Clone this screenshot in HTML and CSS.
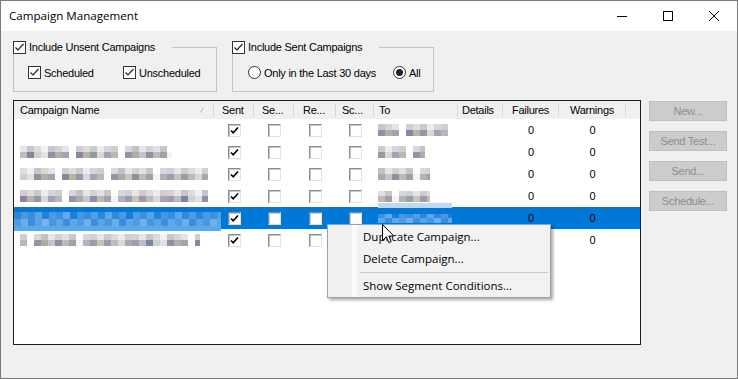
FILE: index.html
```html
<!DOCTYPE html>
<html>
<head>
<meta charset="utf-8">
<title>Campaign Management</title>
<link rel="stylesheet" href="styles.css">
</head>
<body>
<div class="window">
  <div class="titlebar">
    <span class="title">Campaign Management</span>
    <div class="wctl">
      <span class="wbtn"><svg width="10" height="10" viewBox="0 0 10 10"><path d="M0 5.5H10" stroke="#000" stroke-width="1"/></svg></span>
      <span class="wbtn"><svg width="10" height="10" viewBox="0 0 10 10"><rect x="0.5" y="0.5" width="9" height="9" fill="none" stroke="#000" stroke-width="1"/></svg></span>
      <span class="wbtn"><svg width="10" height="10" viewBox="0 0 10 10"><path d="M0 0L10 10M10 0L0 10" stroke="#000" stroke-width="1"/></svg></span>
    </div>
  </div>
  <div class="client">
    <div class="filters">
      <div class="group g1">
        <div class="legend"><span class="cbx"><svg width="11" height="11" viewBox="0 0 11 11"><path d="M1.5 5.5L4 8L9.5 2" fill="none" stroke="#222" stroke-width="1.2"/></svg></span>Include Unsent Campaigns</div>
        <div class="group-body">
          <div class="opt w95"><span class="cbx"><svg width="11" height="11" viewBox="0 0 11 11"><path d="M1.5 5.5L4 8L9.5 2" fill="none" stroke="#222" stroke-width="1.2"/></svg></span>Scheduled</div>
          <div class="opt"><span class="cbx"><svg width="11" height="11" viewBox="0 0 11 11"><path d="M1.5 5.5L4 8L9.5 2" fill="none" stroke="#222" stroke-width="1.2"/></svg></span>Unscheduled</div>
        </div>
      </div>
      <div class="group g2">
        <div class="legend"><span class="cbx"><svg width="11" height="11" viewBox="0 0 11 11"><path d="M1.5 5.5L4 8L9.5 2" fill="none" stroke="#222" stroke-width="1.2"/></svg></span>Include Sent Campaigns</div>
        <div class="group-body gb2">
          <div class="opt w145"><span class="rad"></span>Only in the Last 30 days</div>
          <div class="opt"><span class="rad on"></span>All</div>
        </div>
      </div>
    </div>
    <div class="main">
      <div class="list">
        <div class="hdr">
          <div class="hc hname">Campaign Name<svg class="sortg" width="4" height="6" viewBox="0 0 4 6"><path d="M0.5 5.5L3.5 0.5" stroke="#b0b0b0" stroke-width="1"/></svg></div>
          <div class="hc p8">Sent</div>
          <div class="hc p8">Se...</div>
          <div class="hc p9">Re...</div>
          <div class="hc p6">Sc...</div>
          <div class="hc p5">To</div>
          <div class="hc p4">Details</div>
          <div class="hc ctr">Failures</div>
          <div class="hc ctr">Warnings</div>
          <div class="hc last"></div>
        </div>

        <div class="row">
          <div class="c name"></div>
          <div class="c ctr"><span class="rcb"><svg width="9" height="9" viewBox="0 0 9 9"><path d="M1 4.5L3.2 6.8L8 1.5" fill="none" stroke="#000" stroke-width="1.7"/></svg></span></div>
          <div class="c ctr"><span class="rcb"></span></div>
          <div class="c ctr"><span class="rcb"></span></div>
          <div class="c ctr"><span class="rcb"></span></div>
          <div class="c to"><span class="blur b1 w70"></span></div>
          <div class="c"></div>
          <div class="c ctr">0</div>
          <div class="c ctr">0</div>
          <div class="c"></div>
        </div>

        <div class="row">
          <div class="c name"><span class="blur b2 w152"></span></div>
          <div class="c ctr"><span class="rcb"><svg width="9" height="9" viewBox="0 0 9 9"><path d="M1 4.5L3.2 6.8L8 1.5" fill="none" stroke="#000" stroke-width="1.7"/></svg></span></div>
          <div class="c ctr"><span class="rcb"></span></div>
          <div class="c ctr"><span class="rcb"></span></div>
          <div class="c ctr"><span class="rcb"></span></div>
          <div class="c to"><span class="blur b3 w47"></span></div>
          <div class="c"></div>
          <div class="c ctr">0</div>
          <div class="c ctr">0</div>
          <div class="c"></div>
        </div>

        <div class="row">
          <div class="c name"><span class="blur b4 w188"></span></div>
          <div class="c ctr"><span class="rcb"><svg width="9" height="9" viewBox="0 0 9 9"><path d="M1 4.5L3.2 6.8L8 1.5" fill="none" stroke="#000" stroke-width="1.7"/></svg></span></div>
          <div class="c ctr"><span class="rcb"></span></div>
          <div class="c ctr"><span class="rcb"></span></div>
          <div class="c ctr"><span class="rcb"></span></div>
          <div class="c to"><span class="blur b5 w52"></span></div>
          <div class="c"></div>
          <div class="c ctr">0</div>
          <div class="c ctr">0</div>
          <div class="c"></div>
        </div>

        <div class="row">
          <div class="c name"><span class="blur b6 w188"></span></div>
          <div class="c ctr"><span class="rcb"><svg width="9" height="9" viewBox="0 0 9 9"><path d="M1 4.5L3.2 6.8L8 1.5" fill="none" stroke="#000" stroke-width="1.7"/></svg></span></div>
          <div class="c ctr"><span class="rcb"></span></div>
          <div class="c ctr"><span class="rcb"></span></div>
          <div class="c ctr"><span class="rcb"></span></div>
          <div class="c to stack"><span class="blur b7 w52"></span><span class="tipbar"></span></div>
          <div class="c"></div>
          <div class="c ctr">0</div>
          <div class="c ctr">0</div>
          <div class="c"></div>
        </div>

        <div class="row sel">
          <div class="c name selname"><span class="blur sblur w207"></span><span class="selbar"></span></div>
          <div class="c ctr"><span class="rcb"><svg width="9" height="9" viewBox="0 0 9 9"><path d="M1 4.5L3.2 6.8L8 1.5" fill="none" stroke="#000" stroke-width="1.7"/></svg></span></div>
          <div class="c ctr"><span class="rcb"></span></div>
          <div class="c ctr"><span class="rcb"></span></div>
          <div class="c ctr"><span class="rcb"></span></div>
          <div class="c to"><span class="blur sblur2 w74"></span></div>
          <div class="c"></div>
          <div class="c ctr">0</div>
          <div class="c ctr">0</div>
          <div class="c"></div>
        </div>

        <div class="row">
          <div class="c name"><span class="blur b8 w180"></span></div>
          <div class="c ctr"><span class="rcb"><svg width="9" height="9" viewBox="0 0 9 9"><path d="M1 4.5L3.2 6.8L8 1.5" fill="none" stroke="#000" stroke-width="1.7"/></svg></span></div>
          <div class="c ctr"><span class="rcb"></span></div>
          <div class="c ctr"><span class="rcb"></span></div>
          <div class="c ctr"><span class="rcb"></span></div>
          <div class="c to"><span class="blur b3 w52"></span></div>
          <div class="c"></div>
          <div class="c ctr">0</div>
          <div class="c ctr">0</div>
          <div class="c"></div>
        </div>

        <div class="menu">
          <div class="mi">Duplicate Campaign...</div>
          <div class="mi">Delete Campaign...</div>
          <div class="msep"></div>
          <div class="mi">Show Segment Conditions...</div>
        </div>
        <svg class="cursor" width="13" height="20" viewBox="0 0 13 20"><path d="M0.5 0.5L0.5 16.5L4.3 12.8L6.8 18.6L9.2 17.6L6.8 12L11.8 12Z" fill="#fff" stroke="#000" stroke-width="1" stroke-linejoin="miter"/></svg>
      </div>
      <div class="buttons">
        <div class="btn">New...</div>
        <div class="btn">Send Test...</div>
        <div class="btn">Send...</div>
        <div class="btn">Schedule...</div>
      </div>
    </div>
  </div>
</div>
</body>
</html>
```
FILE: styles.css
```css
* { box-sizing: border-box; }
html, body { margin: 0; padding: 0; }
body {
  width: 738px;
  height: 379px;
  overflow: hidden;
  background: #f0f0f0;
  font-family: "Liberation Sans", Arial, sans-serif;
  font-size: 11px;
  letter-spacing: -0.25px;
  color: #000;
}
.window {
  width: 738px;
  height: 379px;
  border: 1px solid #7a7a7a;
  background: #f0f0f0;
  display: flex;
  flex-direction: column;
}
.titlebar {
  height: 30px;
  flex: none;
  background: #fff;
  display: flex;
  align-items: center;
}
.title {
  font-family: "Open Sans", "Noto Sans", sans-serif;
  font-size: 11.6px;
  letter-spacing: 0;
  margin-left: 8px;
  margin-top: -1px;
}
.wctl { margin-left: auto; display: flex; }
.wbtn {
  width: 46px;
  height: 30px;
  display: flex;
  align-items: center;
  justify-content: center;
}
.client {
  flex: 1;
  padding: 16px 0 0 12px;
}
.filters { display: flex; gap: 15px; }
.group {
  height: 45px;
  border: 1px solid #c4c4c4;
  display: flex;
  flex-direction: column;
}
.g1 { width: 204px; }
.g2 { width: 202px; }
.legend {
  display: flex;
  align-items: center;
  gap: 3px;
  height: 13px;
  line-height: 13px;
  margin: -7px 0 0 -1px;
  padding-right: 17px;
  background: #f0f0f0;
  align-self: flex-start;
  white-space: nowrap;
}
.group-body {
  display: flex;
  align-items: center;
  margin-top: 12px;
  padding-left: 14px;
}
.gb2 { padding-left: 15px; }
.opt {
  display: flex;
  align-items: center;
  gap: 3px;
  height: 13px;
  white-space: nowrap;
}
.w95 { width: 95px; }
.w145 { width: 145px; }
.cbx {
  width: 13px;
  height: 13px;
  flex: none;
  border: 1px solid #333;
  background: #fff;
  display: flex;
  align-items: center;
  justify-content: center;
}
.rad {
  width: 13px;
  height: 13px;
  flex: none;
  border: 1px solid #333;
  border-radius: 50%;
  background: #fff;
  display: flex;
  align-items: center;
  justify-content: center;
}
.rad.on::after {
  content: "";
  width: 7px;
  height: 7px;
  border-radius: 50%;
  background: #222;
}
.main {
  display: flex;
  margin-top: 8px;
}
.list {
  width: 628px;
  height: 245px;
  border: 1px solid #1c1c1c;
  background: #fff;
  position: relative;
  overflow: hidden;
}
.hdr, .row {
  display: grid;
  grid-template-columns: 200px 40px 40px 42px 38px 84px 45px 56px 67px 1fr;
}
.hdr {
  height: 18px;
  align-items: start;
  background: #f0f0f0;
}
.hc {
  height: 13px;
  margin-top: 3px;
  line-height: 13px;
  border-right: 1px solid #dadada;
  white-space: nowrap;
  overflow: hidden;
}
.hc.last { border-right: none; }
.hname {
  padding-left: 6px;
  display: flex;
  align-items: center;
}
.sortg { margin-left: auto; margin-right: 9px; margin-top: -2px; }
.p4 { padding-left: 4px; }
.p5 { padding-left: 5px; }
.p6 { padding-left: 6px; }
.p8 { padding-left: 8px; }
.p9 { padding-left: 9px; }
.ctr { text-align: center; justify-content: center; }
.row { height: 22px; }
.row.sel { background: #0078d7; }
.c {
  display: flex;
  align-items: center;
  height: 22px;
  white-space: nowrap;
}
.name { padding-left: 6px; }
.to { padding-left: 4px; }
.rcb {
  width: 13px;
  height: 13px;
  background: #fff;
  border: 1px solid;
  border-color: #8a8a8a #e2e2e2 #e2e2e2 #8a8a8a;
  box-shadow: inset 1px 1px 0 #c8c8c8;
  display: flex;
  align-items: center;
  justify-content: center;
}
.blur {
  display: block;
  height: 12px;
  background-repeat: repeat-x;
  background-size: 210px 6px, 210px 6px;
  background-image:
    linear-gradient(90deg, #d4d2d8 0 7px, #e6e6e6 7px 14px, #ccc4cc 14px 21px, #dcdcdc 21px 28px, #f0f0f0 28px 35px, #c6c6d0 35px 42px, #d8d4d2 42px 49px, #e4e4ea 49px 56px, #ffffff 56px 63px, #d2cdd8 63px 70px, #e0dcda 70px 77px, #cacaca 77px 84px, #ececec 84px 91px, #d6d6e0 91px 98px, #cecece 98px 105px, #ffffff 105px 112px, #dcd6e0 112px 119px, #c4c0ca 119px 126px, #e6e6e6 126px 133px, #d2d2d2 133px 140px, #e0e0ea 140px 147px, #cac6c4 147px 154px, #ffffff 154px 161px, #d8d8d8 161px 168px, #ced2d8 168px 175px, #e6e6e6 175px 182px, #d2c8d2 182px 189px, #dcdcdc 189px 196px, #ececec 196px 203px, #d0d0d0 203px 210px),
    linear-gradient(90deg, #a89aa8 0 7px, #bcbcc2 7px 14px, #7c8a98 14px 21px, #ccd2cc 21px 28px, #e2e2e2 28px 35px, #988ea2 35px 42px, #b4aeaa 42px 49px, #a0a6b0 49px 56px, #ffffff 56px 63px, #8c84a0 63px 70px, #bcb2a8 70px 77px, #949aa4 77px 84px, #d8d8d8 84px 91px, #a8a0b4 91px 98px, #b8b8b8 98px 105px, #ffffff 105px 112px, #9894a8 112px 119px, #b0aaa0 119px 126px, #c4c4ca 126px 133px, #8c92a0 133px 140px, #bcbcb2 140px 147px, #a69cac 147px 154px, #f4f4f4 154px 161px, #b2b2bc 161px 168px, #989eaa 168px 175px, #c8c4b8 175px 182px, #a098ac 182px 189px, #bcbcbc 189px 196px, #d8d8d8 196px 203px, #a8a8b4 203px 210px);
  background-position: 0 0, 0 6px;
}
.b1 { background-position: -35px 0, -35px 6px; }
.b2 { background-position: -7px 0, -7px 6px; }
.b3 { background-position: -77px 0, -77px 6px; }
.b4 { background-position: -21px 0, -21px 6px; }
.b5 { background-position: -119px 0, -119px 6px; }
.b6 { background-position: -63px 0, -63px 6px; }
.b7 { background-position: -140px 0, -140px 6px; }
.b8 { background-position: -98px 0, -98px 6px; }
.sblur, .sblur2 {
  background-image:
    linear-gradient(90deg, #2e86da 0 7px, #4a98e2 7px 14px, #3a8cdc 14px 21px, #5aa2e6 21px 28px, #2a82d8 28px 35px, #4c9ae2 35px 42px, #3f90de 42px 49px, #66a8ea 49px 56px, #1a7dd8 56px 63px, #4896e0 63px 70px, #3a8cdc 70px 77px, #52a0e4 77px 84px, #2e86da 84px 91px, #5ea4e8 91px 98px, #3488da 98px 105px, #4a98e2 105px 112px, #1a7dd8 112px 119px, #4e9ce4 119px 126px, #3c8ede 126px 133px, #58a2e6 133px 140px, #2a82d8 140px 147px, #4896e0 147px 154px, #3a8cdc 154px 161px, #5ea6e8 161px 168px, #3488da 168px 175px, #4e9ce4 175px 182px, #2e86da 182px 189px, #4a98e2 189px 196px, #3c8ede 196px 203px, #52a0e4 203px 210px),
    linear-gradient(90deg, #4e9ce4 0 7px, #6aaeea 7px 14px, #3c8ede 14px 21px, #58a2e6 21px 28px, #78b4ec 28px 35px, #4896e0 35px 42px, #5ea6e8 42px 49px, #3a8cdc 49px 56px, #62a6e8 56px 63px, #4e9ce4 63px 70px, #70b0ea 70px 77px, #3c8ede 77px 84px, #58a2e6 84px 91px, #4896e0 91px 98px, #6aaeea 98px 105px, #3a8cdc 105px 112px, #5ea6e8 112px 119px, #4e9ce4 119px 126px, #70b0ea 126px 133px, #4896e0 133px 140px, #58a2e6 140px 147px, #3c8ede 147px 154px, #62a6e8 154px 161px, #4e9ce4 161px 168px, #6aaeea 168px 175px, #3a8cdc 175px 182px, #58a2e6 182px 189px, #4896e0 189px 196px, #70b0ea 196px 203px, #5ea6e8 203px 210px);
  background-size: 210px 7px, 210px 7px;
  background-position: 0 0, 0 7px;
}
.sblur { height: 14px; }
.sblur2 {
  height: 9px;
  background-size: 210px 4px, 210px 5px;
  background-position: -42px 0, -42px 4px;
}
.w47 { width: 47px; }
.w52 { width: 52px; }
.w70 { width: 70px; }
.w74 { width: 74px; }
.w152 { width: 152px; }
.w180 { width: 180px; }
.w188 { width: 188px; }
.w207 { width: 207px; }
.stack {
  flex-direction: column;
  align-items: flex-start;
  justify-content: flex-end;
}
.stack .blur { height: 11px; margin-bottom: 1px; background-size: 210px 5px, 210px 6px; background-position: -140px 0, -140px 5px; }
.tipbar {
  display: block;
  width: 74px;
  height: 5px;
  margin-bottom: -1px;
  background: #bcdaf4;
}
.selname {
  padding-left: 0;
  flex-direction: column;
  align-items: flex-start;
  justify-content: flex-end;
}
.selbar {
  display: block;
  width: 207px;
  height: 5px;
  margin-bottom: -2px;
  background: #5ea8e8;
}
.menu {
  position: absolute;
  left: 313px;
  top: 123px;
  width: 224px;
  height: 74px;
  padding: 1px 1px;
  background: linear-gradient(90deg, #f0f0f0 0 24px, #fbfbfb 24px 29px, #f2f2f2 29px);
  border: 1px solid #a0a0a0;
  box-shadow: 2px 2px 3px rgba(0, 0, 0, 0.35);
  font-family: "Open Sans", "Noto Sans", sans-serif;
  font-size: 11.5px;
  letter-spacing: 0;
  color: #000;
  z-index: 2;
}
.mi {
  height: 22px;
  line-height: 22px;
  padding-left: 34px;
}
.msep {
  height: 5px;
  margin: 0 1px 0 31px;
  border-top: 2px solid transparent;
  border-bottom: 2px solid transparent;
  background: #c8c8c8;
  background-clip: content-box;
}
.cursor {
  position: absolute;
  left: 368px;
  top: 123px;
  z-index: 3;
}
.buttons {
  margin-left: 8px;
  margin-top: 1px;
  display: flex;
  flex-direction: column;
  gap: 10px;
}
.btn {
  width: 78px;
  height: 20px;
  background: #cccccc;
  border: 1px solid #bfbfbf;
  color: #8c8c8c;
  display: flex;
  align-items: center;
  justify-content: center;
  white-space: nowrap;
}
```
